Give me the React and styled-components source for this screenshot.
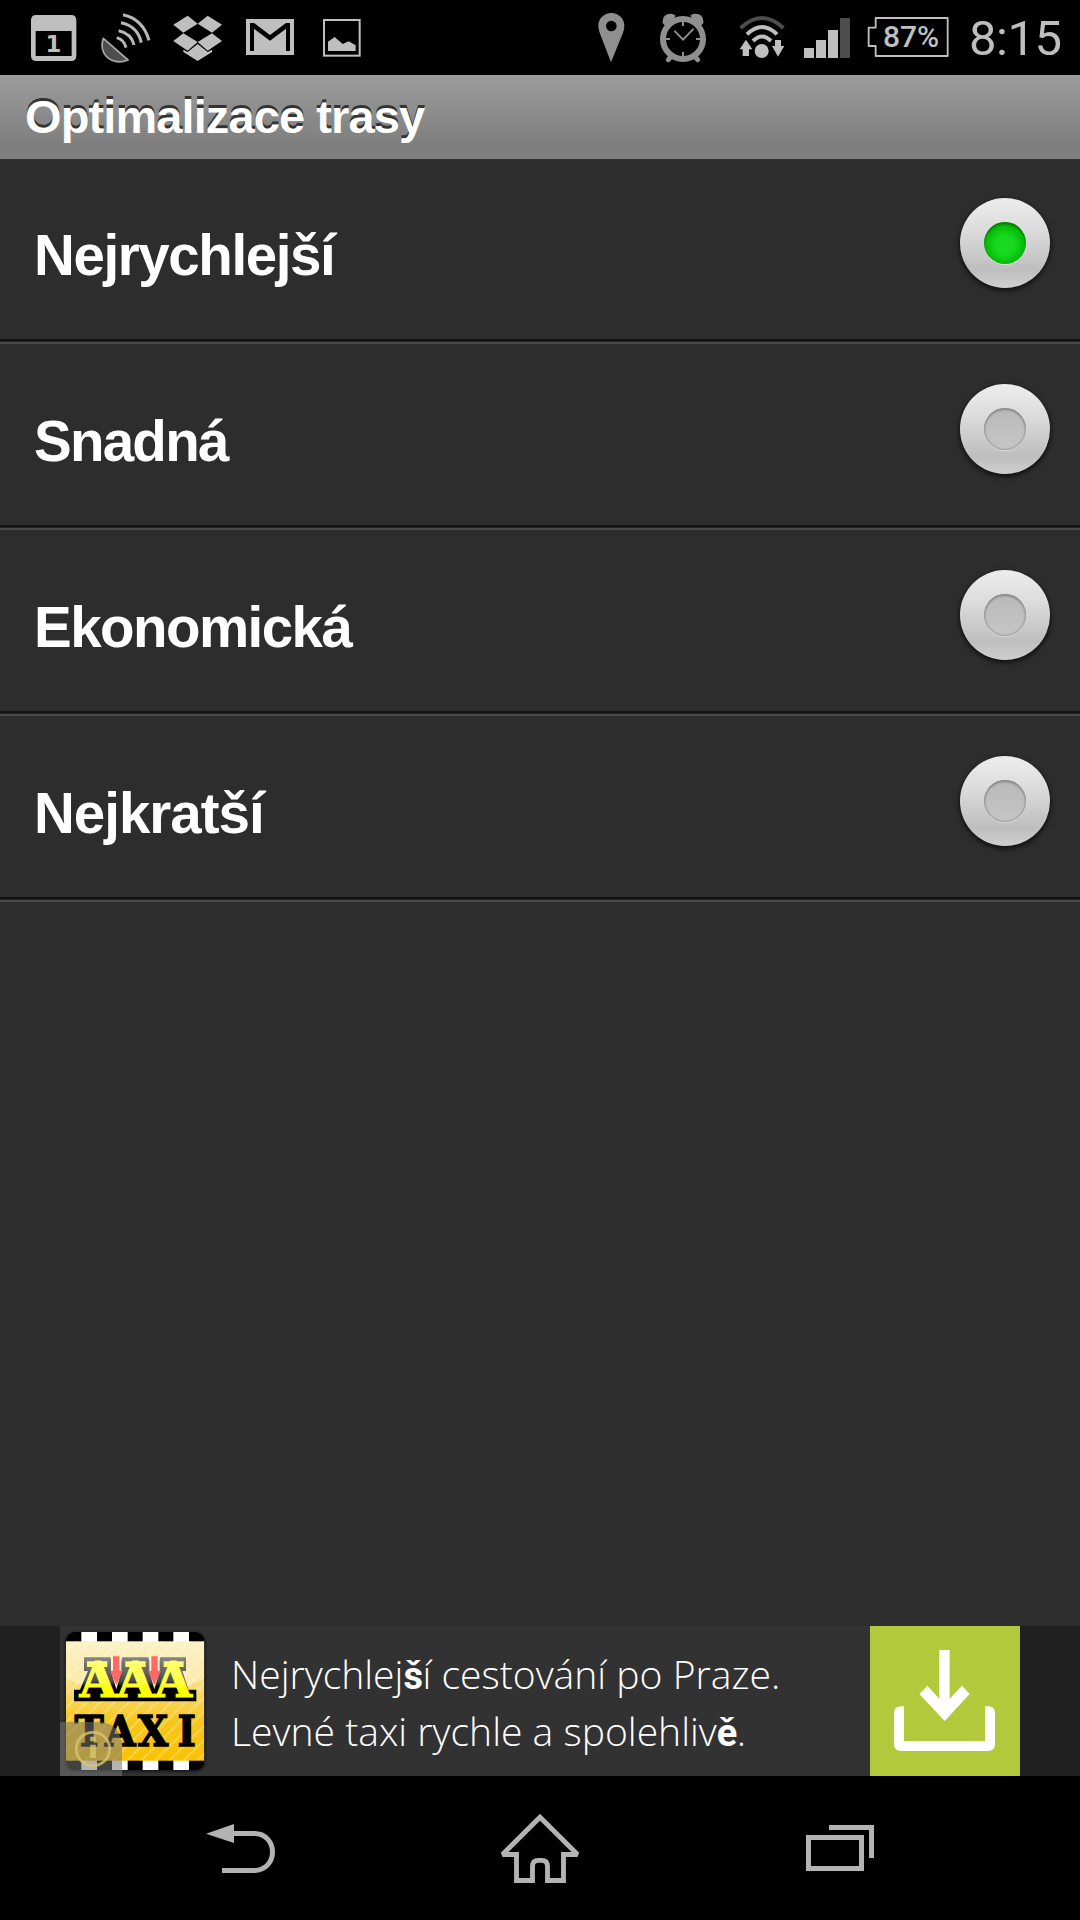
import React, { useState } from 'react';
import styled, { createGlobalStyle } from 'styled-components';

const GlobalStyle = createGlobalStyle`
  * { box-sizing: border-box; }
  body { margin: 0; background: #2d2d2d; }
`;

const Screen = styled.div`
  width: 1080px;
  height: 1920px;
  display: flex;
  flex-direction: column;
  background: #2d2d2d;
  overflow: hidden;
  font-family: "Liberation Sans", Arial, sans-serif;
`;

const StatusBar = styled.header`
  height: 75px;
  flex: none;
  display: flex;
  justify-content: space-between;
  padding: 0 18px 0 31px;
  background: #000;
`;

const StatusGroup = styled.div`
  display: flex;
  align-items: flex-start;
`;

/* Drawn on a grid three times finer than the screen. */
const Glyph = styled.svg`
  display: block;
  flex: none;
  width: ${(p) => p.$w}px;
  height: ${(p) => p.$h || 75}px;
  margin-left: ${(p) => p.$gap || 0}px;
`;

const Battery = styled.div`
  display: flex;
  position: relative;
  margin-left: 17px;
`;

const BatteryLevel = styled.span`
  position: absolute;
  left: 16px;
  top: 20px;
  font: 500 30px/34px Roboto, sans-serif;
  letter-spacing: -0.1px;
  color: #c0c0c0;
`;

const Clock = styled.time`
  margin-left: 20px;
  width: 93px;
  font: 400 49px/78px Roboto, sans-serif;
  letter-spacing: -0.5px;
  white-space: nowrap;
  color: #bebebe;
`;

const TitleBar = styled.div`
  height: 84px;
  flex: none;
  padding-left: 25px;
  background: linear-gradient(#9c9c9c, #7f7f7f 82%);
`;

const Title = styled.h1`
  margin: 0;
  font-size: 47px;
  font-weight: 700;
  line-height: 84px;
  letter-spacing: -0.9px;
  color: #fff;
  text-shadow: 0 -3px 0 #333;
`;

const Options = styled.ul`
  flex: 1;
  margin: 0;
  padding: 0;
  list-style: none;
`;

const Option = styled.li`
  height: 186px;
  display: flex;
  justify-content: space-between;
  padding: 0 30px 0 34px;
  cursor: pointer;
  background: linear-gradient(
    #2d2d2d 180px, #131313 180px, #131313 182px, #222 182px, #222 183px,
    #494949 183px, #494949 185px, #2d2d2d 185px
  );
`;

const OptionLabel = styled.span`
  padding-top: 64px;
  font-size: 56.5px;
  font-weight: 700;
  line-height: 66px;
  letter-spacing: ${(p) => p.$tracking}px;
  color: #fff;
`;

const Radio = styled.span`
  display: grid;
  place-items: center;
  width: 90px;
  height: 90px;
  margin-top: 39px;
  border-radius: 50%;
  background: linear-gradient(#ededed, #dcdcdc 35%, #bebebe 80%, #cfcfcf);
  box-shadow: 0 2px 4px 1px rgba(0, 0, 0, 0.6);
`;

const Dot = styled.span`
  width: 42px;
  height: 42px;
  border-radius: 50%;
  background: ${(p) =>
    p.$on
      ? 'radial-gradient(circle at 50% 55%, #18d81f 30%, #05b907 62%, #0a930b 76%)'
      : 'linear-gradient(#b9b9b9, #c6c6c6)'};
  box-shadow: ${(p) =>
    p.$on
      ? 'inset 0 2px 2px rgba(0, 90, 0, 0.55), 0 1px 1px rgba(240, 240, 240, 0.6)'
      : 'inset 0 2px 2px #8c8c8c, inset 0 0 2px 1px #9c9c9c, 0 1px 1px #dadada'};
`;

const AdStrip = styled.aside`
  height: 150px;
  flex: none;
  display: flex;
  justify-content: center;
  background: #202020;
`;

const Ad = styled.div`
  width: 960px;
  display: flex;
  background: #323232;
`;

const AdText = styled.p`
  flex: 1;
  margin: 0;
  padding: 19px 0 0 21px;
  font: 300 39.1px/57px "Open Sans", "Noto Sans", sans-serif;
  white-space: nowrap;
  color: #fff;
  b { font-family: Roboto, sans-serif; font-weight: 700; font-size: 38px; line-height: 1; letter-spacing: -0.5px; }
`;

const Download = styled.button`
  width: 150px;
  padding: 0;
  border: 0;
  background: #b1c93a;
`;

const NavBar = styled.nav`
  height: 144px;
  flex: none;
  display: flex;
  padding-left: 206px;
  background: #000;
`;

const LIGHT = '#bfbfbf';
const DIM = '#8f8f8f';

const CalendarIcon = () => (
  <Glyph $w={46} viewBox="94 0 138 225">
    <path fill={LIGHT} fillRule="evenodd" d="M110 45H214Q230 45 230 61V167Q230 183 214 183H110Q94 183 94 167V61Q94 45 110 45ZM108 93V168H216V93Z" />
    <text x="161" y="157" textAnchor="middle" fontFamily="DejaVu Sans" fontWeight="700" fontSize="68" fill={LIGHT}>1</text>
  </Glyph>
);

const DishIcon = () => (
  <Glyph $w={50} $gap={24} viewBox="303 0 150 225">
    <path d="M310 115L384 180C350 194 315 180 307 146Q305 130 310 115Z" fill="#4d4d4d" stroke="#a8a8a8" strokeWidth="5" strokeLinejoin="round" />
    <g fill="none" stroke="#b8b8b8" strokeWidth="9">
      <path d="M369 44Q429 57 447 121" />
      <path d="M363 68Q413 78 424 128" />
      <path d="M356 92Q394 100 402 135" />
      <path d="M350 113Q372 119 378 143" />
    </g>
  </Glyph>
);

const DropboxIcon = () => (
  <Glyph $w={49} $gap={22} viewBox="520 0 147 225">
    <g fill={LIGHT}>
      <path d="M521 74L564 47L594 71L551 98Z" />
      <path d="M667 74L624 47L594 71L637 98Z" />
      <path d="M521 123L551 100L594 126L564 152Z" />
      <path d="M667 123L637 100L594 126L624 152Z" />
      <path d="M551 149L564 156L594 132L624 156L637 149V156L594 183L551 156Z" />
    </g>
  </Glyph>
);

const MailIcon = () => (
  <Glyph $w={48} $gap={24} viewBox="738 0 144 225">
    <path fill={LIGHT} d="M738 57H882V165H738Z" />
    <path fill="#000" d="M750 153V69H762L810 105L858 69H870V153H858V86L810 122L762 86V153Z" />
  </Glyph>
);

const PictureIcon = () => (
  <Glyph $w={38} $gap={29} viewBox="969 0 114 225">
    <rect x="972" y="60" width="107" height="107" fill="none" stroke={LIGHT} strokeWidth="6" />
    <path fill={LIGHT} d="M984 153V125L1004 111L1028 132L1046 124L1067 136V153Z" />
  </Glyph>
);

const PinIcon = () => (
  <Glyph $w={27} viewBox="53 0 81 225">
    <path fill={DIM} fillRule="evenodd" d="M92 187L58 98Q54 88 54 77C54 56 71 39 93 39S132 56 132 77Q132 88 128 98ZM93 62A16 16 0 1 0 93 94A16 16 0 1 0 93 62Z" />
  </Glyph>
);

const AlarmIcon = () => (
  <Glyph $w={46} $gap={35} viewBox="240 0 138 225">
    <g fill="none" stroke={DIM} strokeLinecap="round">
      <circle cx="309" cy="117" r="60" strokeWidth="18" />
      <path strokeWidth="18" d="M257 66L274 51M361 66L344 51" />
      <path strokeWidth="15" d="M272 170L265 179M346 170L353 179" />
      <path strokeWidth="6" strokeLinecap="butt" d="M309 66V78M309 156V168M258 117H270M348 117H360" />
      <path strokeWidth="6" d="M285 94L309 119L339 88" />
    </g>
    <path fill={DIM} d="M250 71Q245 50 261 43Q277 38 288 48ZM368 71Q373 50 357 43Q341 38 330 48Z" />
  </Glyph>
);

const WifiIcon = () => (
  <Glyph $w={46} $gap={33} viewBox="477 0 138 225">
    <g fill="none" strokeWidth="12">
      <path stroke="#4d4d4d" d="M482 84Q546 24 610 84" />
      <path stroke={LIGHT} d="M501 103Q546 59 591 103" />
      <path stroke={LIGHT} d="M519 123Q546 96 573 123" />
    </g>
    <circle cx="545" cy="153" r="21" fill={LIGHT} />
    <path fill={LIGHT} d="M498 119L517 148H507V168H488V148H479ZM594 170L613 138H603V120H585V138H576Z" />
  </Glyph>
);

const SignalIcon = () => (
  <Glyph $w={46} $gap={19} viewBox="672 0 138 225">
    <path fill={LIGHT} d="M672 144H702V174H672ZM708 120H738V174H708ZM744 90H774V174H744Z" />
    <path fill="#4d4d4d" d="M780 54H810V174H780Z" />
  </Glyph>
);

const BatteryIcon = () => (
  <Glyph $w={82} viewBox="112 0 246 225">
    <path fill="none" stroke={LIGHT} strokeWidth="5.500" strokeLinejoin="round" d="M138 54H354V168H138V138H117V83H138Z" />
  </Glyph>
);

const TaxiLogo = () => (
  <Glyph $w={150} $h={150} viewBox="30 48 450 450">
    <defs>
      <linearGradient id="gold" x2="0" y2="1">
        <stop offset="0" stopColor="#fbf2c4" />
        <stop offset=".4" stopColor="#f8dc74" />
        <stop offset=".68" stopColor="#f7c61b" />
        <stop offset="1" stopColor="#fac202" />
      </linearGradient>
      <linearGradient id="edge" gradientUnits="userSpaceOnUse" x1="0" y1="142" x2="0" y2="272">
        <stop offset="0" stopColor="#858585" />
        <stop offset=".55" stopColor="#4b4b4b" />
        <stop offset=".68" stopColor="#000" />
      </linearGradient>
      <linearGradient id="lemon" gradientUnits="userSpaceOnUse" x1="0" y1="150" x2="0" y2="265">
        <stop offset="0" stopColor="#ffff75" />
        <stop offset=".6" stopColor="#ffff40" />
        <stop offset=".75" stopColor="#ffff00" />
      </linearGradient>
      <linearGradient id="gloss" x2="0" y2="1">
        <stop offset="0" stopColor="#fff" stopOpacity=".05" />
        <stop offset="1" stopColor="#fff" stopOpacity=".45" />
      </linearGradient>
      <pattern id="stripe" width="30" height="30" patternUnits="userSpaceOnUse" patternTransform="rotate(45)">
        <rect width="5" height="30" fill="#fff" opacity=".28" />
      </pattern>
      <clipPath id="tile"><rect x="48" y="66" width="415" height="414" rx="27" /></clipPath>
      <filter id="soft"><feGaussianBlur stdDeviation="5" /></filter>
    </defs>
    <rect x="47" y="68" width="418" height="416" rx="28" fill="#000" opacity=".7" filter="url(#soft)" />
    <g clipPath="url(#tile)">
      <rect x="48" y="66" width="415" height="414" fill="#000" />
      <path fill="#fff" d="M94 66h47v30h-47zM186 66h47v30h-47zM278 66h47v30h-47zM370 66h47v30h-47zM94 450h47v30h-47zM186 450h47v30h-47zM278 450h47v30h-47zM370 450h47v30h-47z" />
      <rect x="48" y="94" width="415" height="358" fill="url(#gold)" />
      <rect x="48" y="94" width="415" height="358" fill="url(#stripe)" />
      <path d="M48 94H463V202Q420 240 257 246Q95 240 48 202Z" fill="url(#gloss)" />
    </g>
    <path fill="url(#edge)" d="M102 142H181L199 195L217 142H295L313 195L331 142H408V183H397L415 239H439V274H72V239H90L114 183H102Z" />
    <path fill="#fff2c0" d="M183 139H214V184L199 238L183 184ZM298 139H329V184L313 238L298 184Z" />
    <path fill="#ff6868" d="M189 139H208V182H218L199 225L180 182H189ZM304 139H323V182H333L313 225L294 182H304Z" />
    <g fontFamily="DejaVu Serif" fontWeight="700" textAnchor="middle">
      <text x="144 257 370" y="262" fontSize="144" fill="url(#lemon)" stroke="url(#lemon)" strokeWidth="3">AAA</text>
      <text transform="scale(.93 1)" x="126 227 332 441" y="409" fontSize="127" fill="#000" stroke="#000" strokeWidth="4">TAXI</text>
    </g>
    <path fill="url(#lemon)" d="M111 154H145V171H111ZM226 154H260V171H226ZM341 154H375V171H341ZM142 154H172V171H142ZM257 154H287V171H257ZM372 154H401V171H372Z" />
    <path fill="#777" opacity=".55" d="M30 336H145Q205 336 216 400V498H30Z" />
    <g fill="none" stroke="#d8c66a" opacity=".8">
      <circle cx="129" cy="417" r="50" strokeWidth="8" />
      <path strokeWidth="17" d="M129 404V444M129 380V394" />
    </g>
  </Glyph>
);

const DownloadIcon = () => (
  <Glyph $w={150} $h={150} viewBox="60 48 450 450">
    <path fill="#fff" d="M268 120H299V266L336 227L359 252L284 333L208 252L232 227L268 266Z" />
    <path fill="#fff" d="M162 289V393H405V289H414Q435 289 435 310V402Q435 423 414 423H153Q132 423 132 402V310Q132 289 153 289Z" />
  </Glyph>
);

const BackIcon = () => (
  <Glyph $w={70} $h={144} viewBox="78 -42 210 432">
    <path fill="#b3b3b3" d="M78 131L162 102V159Z" />
    <path fill="none" stroke="#b3b3b3" strokeWidth="15" d="M160 130.500H223C257 130.500 277.500 157 277.500 186S257 241.500 223 241.500H126" />
  </Glyph>
);

const HomeIcon = () => (
  <Glyph $w={80} $h={144} $gap={224} viewBox="960 -42 240 432">
    <path fill="none" stroke="#b3b3b3" strokeWidth="14.500" strokeMiterlimit="2" d="M1009.500 271.500V193.500H967.500L1080 81.500L1192.500 193.500H1150.500V271.500H1102.500V229Q1102.500 211 1085 211H1075Q1057.500 211 1057.500 229V271.500Z" />
  </Glyph>
);

const RecentsIcon = () => (
  <Glyph $w={68} $h={144} $gap={226} viewBox="78 -42 204 432">
    <path fill="none" stroke="#b3b3b3" strokeWidth="15" d="M85.500 142.500H244.500V235.500H85.500ZM147 112.500H274.500V204" />
  </Glyph>
);

const routes = [
  { label: 'Nejrychlejší', tracking: -1.4 },
  { label: 'Snadná', tracking: -1.75 },
  { label: 'Ekonomická', tracking: -1.55 },
  { label: 'Nejkratší', tracking: -1 },
];

export default function App() {
  const [selected, setSelected] = useState(0);
  return (
    <Screen>
      <GlobalStyle />
      <StatusBar>
        <StatusGroup>
          <CalendarIcon />
          <DishIcon />
          <DropboxIcon />
          <MailIcon />
          <PictureIcon />
        </StatusGroup>
        <StatusGroup>
          <PinIcon />
          <AlarmIcon />
          <WifiIcon />
          <SignalIcon />
          <Battery>
            <BatteryIcon />
            <BatteryLevel>87%</BatteryLevel>
          </Battery>
          <Clock>8:15</Clock>
        </StatusGroup>
      </StatusBar>
      <TitleBar>
        <Title>Optimalizace trasy</Title>
      </TitleBar>
      <Options>
        {routes.map((route, i) => (
          <Option key={route.label} onClick={() => setSelected(i)}>
            <OptionLabel $tracking={route.tracking}>{route.label}</OptionLabel>
            <Radio>
              <Dot $on={i === selected} />
            </Radio>
          </Option>
        ))}
      </Options>
      <AdStrip>
        <Ad>
          <TaxiLogo />
          <AdText>
            Nejrychlej<b>š</b>í cestování po Praze.
            <br />
            Levné taxi rychle a spolehliv<b>ě</b>.
          </AdText>
          <Download>
            <DownloadIcon />
          </Download>
        </Ad>
      </AdStrip>
      <NavBar>
        <BackIcon />
        <HomeIcon />
        <RecentsIcon />
      </NavBar>
    </Screen>
  );
}
